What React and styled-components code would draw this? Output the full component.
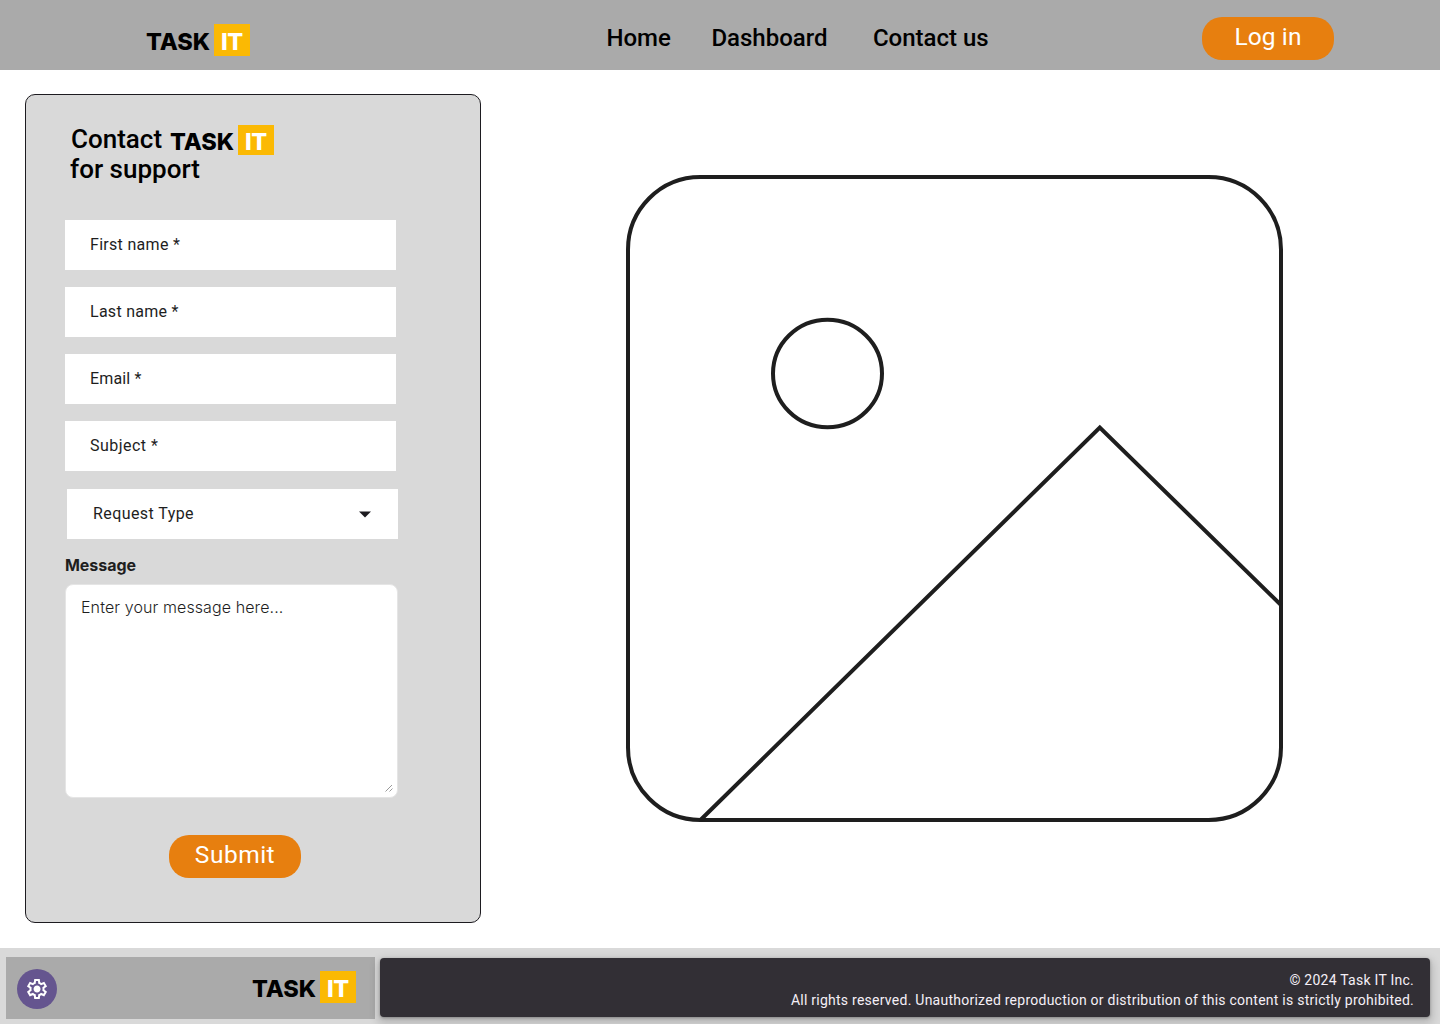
import React from "react";
import styled, { createGlobalStyle } from "styled-components";

const GlobalStyle = createGlobalStyle`
  *, *::before, *::after { box-sizing: border-box; }
  body {
    margin: 0;
    background: #ffffff;
    font-family: Roboto, "Liberation Sans", sans-serif;
    color: #000000;
  }
`;

const Page = styled.div`
  display: flex;
  flex-direction: column;
  width: 1440px;
  height: 1024px;
  overflow: hidden;
`;

const Header = styled.header`
  display: grid;
  grid-template-columns: 606px 596px 132px;
  height: 70px;
  background: #aaaaaa;
`;

const HeaderBrand = styled.div`
  padding: 24px 0 0 146px;
`;

const LogoRoot = styled.div`
  display: flex;
  width: 104px;
  height: ${(p) => p.$height}px;
  font: 850 23.5px/32px Inter, "Liberation Sans", sans-serif;
  white-space: nowrap;
`;

const LogoWord = styled.span`
  width: 68px;
  padding-top: ${(p) => p.$shift}px;
  letter-spacing: 0;
`;

const LogoBadge = styled.span`
  width: 36px;
  padding: ${(p) => p.$shift}px 0 0 7px;
  background: #fbb903;
  color: #ffffff;
  letter-spacing: -0.4px;
`;

function Logo({ height = 32, shift = 2 }) {
  return (
    <LogoRoot $height={height}>
      <LogoWord $shift={shift}>TASK</LogoWord>
      <LogoBadge $shift={shift}>IT</LogoBadge>
    </LogoRoot>
  );
}

const Nav = styled.nav`
  display: flex;
  padding: 22px 0 0 0.4px;
`;

const NavLink = styled.a`
  width: ${(p) => p.$width}px;
  font-size: 24px;
  font-weight: 500;
  line-height: 32px;
  white-space: nowrap;
`;

const Pill = styled.button`
  width: 132px;
  height: 43px;
  margin: 0;
  padding: 0 0 3px;
  border: 0;
  border-radius: 20px;
  background: #e77f0f;
  color: #ffffff;
  font: 400 24.5px/40px Roboto, sans-serif;
  letter-spacing: ${(p) => p.$tracking}px;
`;

const LoginSlot = styled.div`
  padding-top: 17px;
`;

const Main = styled.main`
  display: flex;
  height: 878px;
  padding: 24px 0 0 25px;
`;

const Card = styled.section`
  display: flex;
  flex-direction: column;
  width: 456px;
  height: 829px;
  padding: 29px 0 0 39px;
  border: 1px solid #1d1b20;
  border-radius: 10px;
  background: #d9d9d9;
`;

const Title = styled.h1`
  margin: 0 0 0 5px;
  height: 96px;
  font-size: 26px;
  font-weight: 500;
  line-height: 30px;
`;

const TitleRow = styled.div`
  display: flex;
  height: 30px;
  padding-left: 1px;
`;

const TitleWord = styled.span`
  width: 99px;
`;

const TitleLogo = styled.div`
  padding-top: 1px;
`;

const Fields = styled.div`
  display: flex;
  flex-direction: column;
  gap: 17px;
`;

const Field = styled.div`
  width: 331px;
  height: 50px;
  padding-left: 25px;
  background: #ffffff;
  color: #1e1e1e;
  font-size: 16px;
  line-height: 49px;
  letter-spacing: ${(p) => p.$tracking}px;
`;

const SelectField = styled(Field)`
  display: flex;
  justify-content: space-between;
  margin: 18px 0 0 2px;
  padding: 0 27px 0 26px;
`;

const Caret = styled.svg`
  margin-top: 22px;
`;

const MessageLabel = styled.label`
  margin-top: 14px;
  color: #1e1e1e;
  font: 700 16px/24px Inter, sans-serif;
  letter-spacing: ${(p) => p.$tracking}px;
`;

const MessageBox = styled.div`
  display: flex;
  flex-direction: column;
  justify-content: space-between;
  width: 333px;
  height: 214px;
  margin-top: 7px;
  padding: 10px 4px 4px 15px;
  border: 1px solid #e5e5e5;
  border-radius: 8px;
  background: #ffffff;
  color: #1e1e1e;
  font: 300 16px/24px Inter, sans-serif;
  letter-spacing: ${(p) => p.$tracking}px;
`;

const Grip = styled.svg`
  align-self: flex-end;
`;

const SubmitSlot = styled.div`
  padding: 37px 0 0 104px;
`;

const Picture = styled.svg`
  margin: 81px 0 0 145px;
`;

const Footer = styled.footer`
  display: flex;
  height: 76px;
  padding: 9px 0 0 6px;
  background: #d9d9d9;
`;

const FooterBrand = styled.div`
  display: flex;
  justify-content: space-between;
  width: 369px;
  height: 62px;
  padding: 12px 19px 0 11px;
  background: #aaaaaa;
`;

const FooterLogo = styled.div`
  padding-top: 2px;
`;

const SettingsButton = styled.button`
  display: flex;
  align-items: center;
  justify-content: center;
  width: 40px;
  height: 40px;
  padding: 0;
  border: 0;
  border-radius: 50%;
  background: #65558f;
`;

const Legal = styled.div`
  width: 1050px;
  height: 59px;
  margin: 1px 0 0 5px;
  padding: 12px 16px 0 0;
  border-radius: 4px;
  background: #322f35;
  box-shadow: 0 1px 3px rgba(0, 0, 0, 0.3), 0 4px 8px 3px rgba(0, 0, 0, 0.15);
  color: #f5eff7;
  font-size: 14px;
  line-height: 20px;
  letter-spacing: ${(p) => p.$tracking}px;
  text-align: right;
`;

const fields = [
  { label: "First name *", tracking: 0.3 },
  { label: "Last name *", tracking: 0.27 },
  { label: "Email *", tracking: 0.15 },
  { label: "Subject *", tracking: 0.48 },
];

export default function App() {
  return (
    <Page>
      <GlobalStyle />
      <Header>
        <HeaderBrand>
          <Logo />
        </HeaderBrand>
        <Nav>
          <NavLink $width={105}>Home</NavLink>
          <NavLink $width={161.5}>Dashboard</NavLink>
          <NavLink $width={130}>Contact us</NavLink>
        </Nav>
        <LoginSlot>
          <Pill $tracking={0.1}>Log in</Pill>
        </LoginSlot>
      </Header>
      <Main>
        <Card>
          <Title>
            <TitleRow>
              <TitleWord>Contact</TitleWord>
              <TitleLogo>
                <Logo height={30} shift={1} />
              </TitleLogo>
            </TitleRow>
            for support
          </Title>
          <Fields>
            {fields.map((f) => (
              <Field key={f.label} $tracking={f.tracking}>
                {f.label}
              </Field>
            ))}
          </Fields>
          <SelectField $tracking={0.42}>
            Request Type
            <Caret width="12" height="7" viewBox="0 0 12 7">
              <path d="M0 0.5H12L6 6.5Z" fill="#1d1b20" />
            </Caret>
          </SelectField>
          <MessageLabel $tracking={-0.05}>Message</MessageLabel>
          <MessageBox $tracking={0.1}>
            Enter your message here...
            <Grip width="8" height="9" viewBox="0 0 8 9" fill="none" stroke="#999999">
              <path d="M0.5 7.5L7 1M4.5 7.5L7.5 4.5" />
            </Grip>
          </MessageBox>
          <SubmitSlot>
            <Pill $tracking={0.5}>Submit</Pill>
          </SubmitSlot>
        </Card>
        <Picture width="658" height="648" viewBox="626 175 658 648" fill="none" stroke="#1e1e1e" strokeWidth="4">
          <rect x="628" y="177" width="653" height="643" rx="72.5" />
          <ellipse cx="827.5" cy="373.5" rx="54.5" ry="53.8" />
          <path d="M700.5 820L1099.8 427.5L1281 605" />
        </Picture>
      </Main>
      <Footer>
        <FooterBrand>
          <SettingsButton aria-label="Settings">
            <svg width="24" height="24" viewBox="0 0 24 24" fill="#ffffff">
              <path d="m9.25 22l-.4-3.2q-.325-.125-.612-.3t-.563-.375L4.7 19.375l-2.75-4.75l2.575-1.95Q4.5 12.5 4.5 12.338v-.675q0-.163.025-.338L1.95 9.375l2.75-4.75l2.975 1.25q.275-.2.575-.375t.6-.3l.4-3.2h5.5l.4 3.2q.325.125.613.3t.562.375l2.975-1.25l2.75 4.75l-2.575 1.95q.025.175.025.338v.674q0 .163-.05.338l2.575 1.95l-2.75 4.75l-2.95-1.25q-.275.2-.575.375t-.6.3l-.4 3.2zM11 20h1.975l.35-2.65q.775-.2 1.438-.587t1.212-.938l2.475 1.025l.975-1.7l-2.15-1.625q.125-.35.175-.737T17.5 12t-.05-.787t-.175-.738l2.15-1.625l-.975-1.7l-2.475 1.05q-.55-.575-1.212-.962t-1.438-.588L13 4h-1.975l-.35 2.65q-.775.2-1.437.588t-1.213.937L5.55 7.15l-.975 1.7l2.15 1.6q-.125.375-.175.75t-.05.8q0 .4.05.775t.175.75l-2.15 1.625l.975 1.7l2.475-1.05q.55.575 1.213.963t1.437.587zm1.05-4.5q1.45 0 2.475-1.025T15.55 12t-1.025-2.475T12.05 8.5q-1.475 0-2.488 1.025T8.55 12t1.013 2.475T12.05 15.5" />
            </svg>
          </SettingsButton>
          <FooterLogo>
            <Logo />
          </FooterLogo>
        </FooterBrand>
        <Legal $tracking={0.25}>
          © 2024 Task IT Inc.
          <br />
          All rights reserved. Unauthorized reproduction or distribution of this content is strictly prohibited.
        </Legal>
      </Footer>
    </Page>
  );
}
